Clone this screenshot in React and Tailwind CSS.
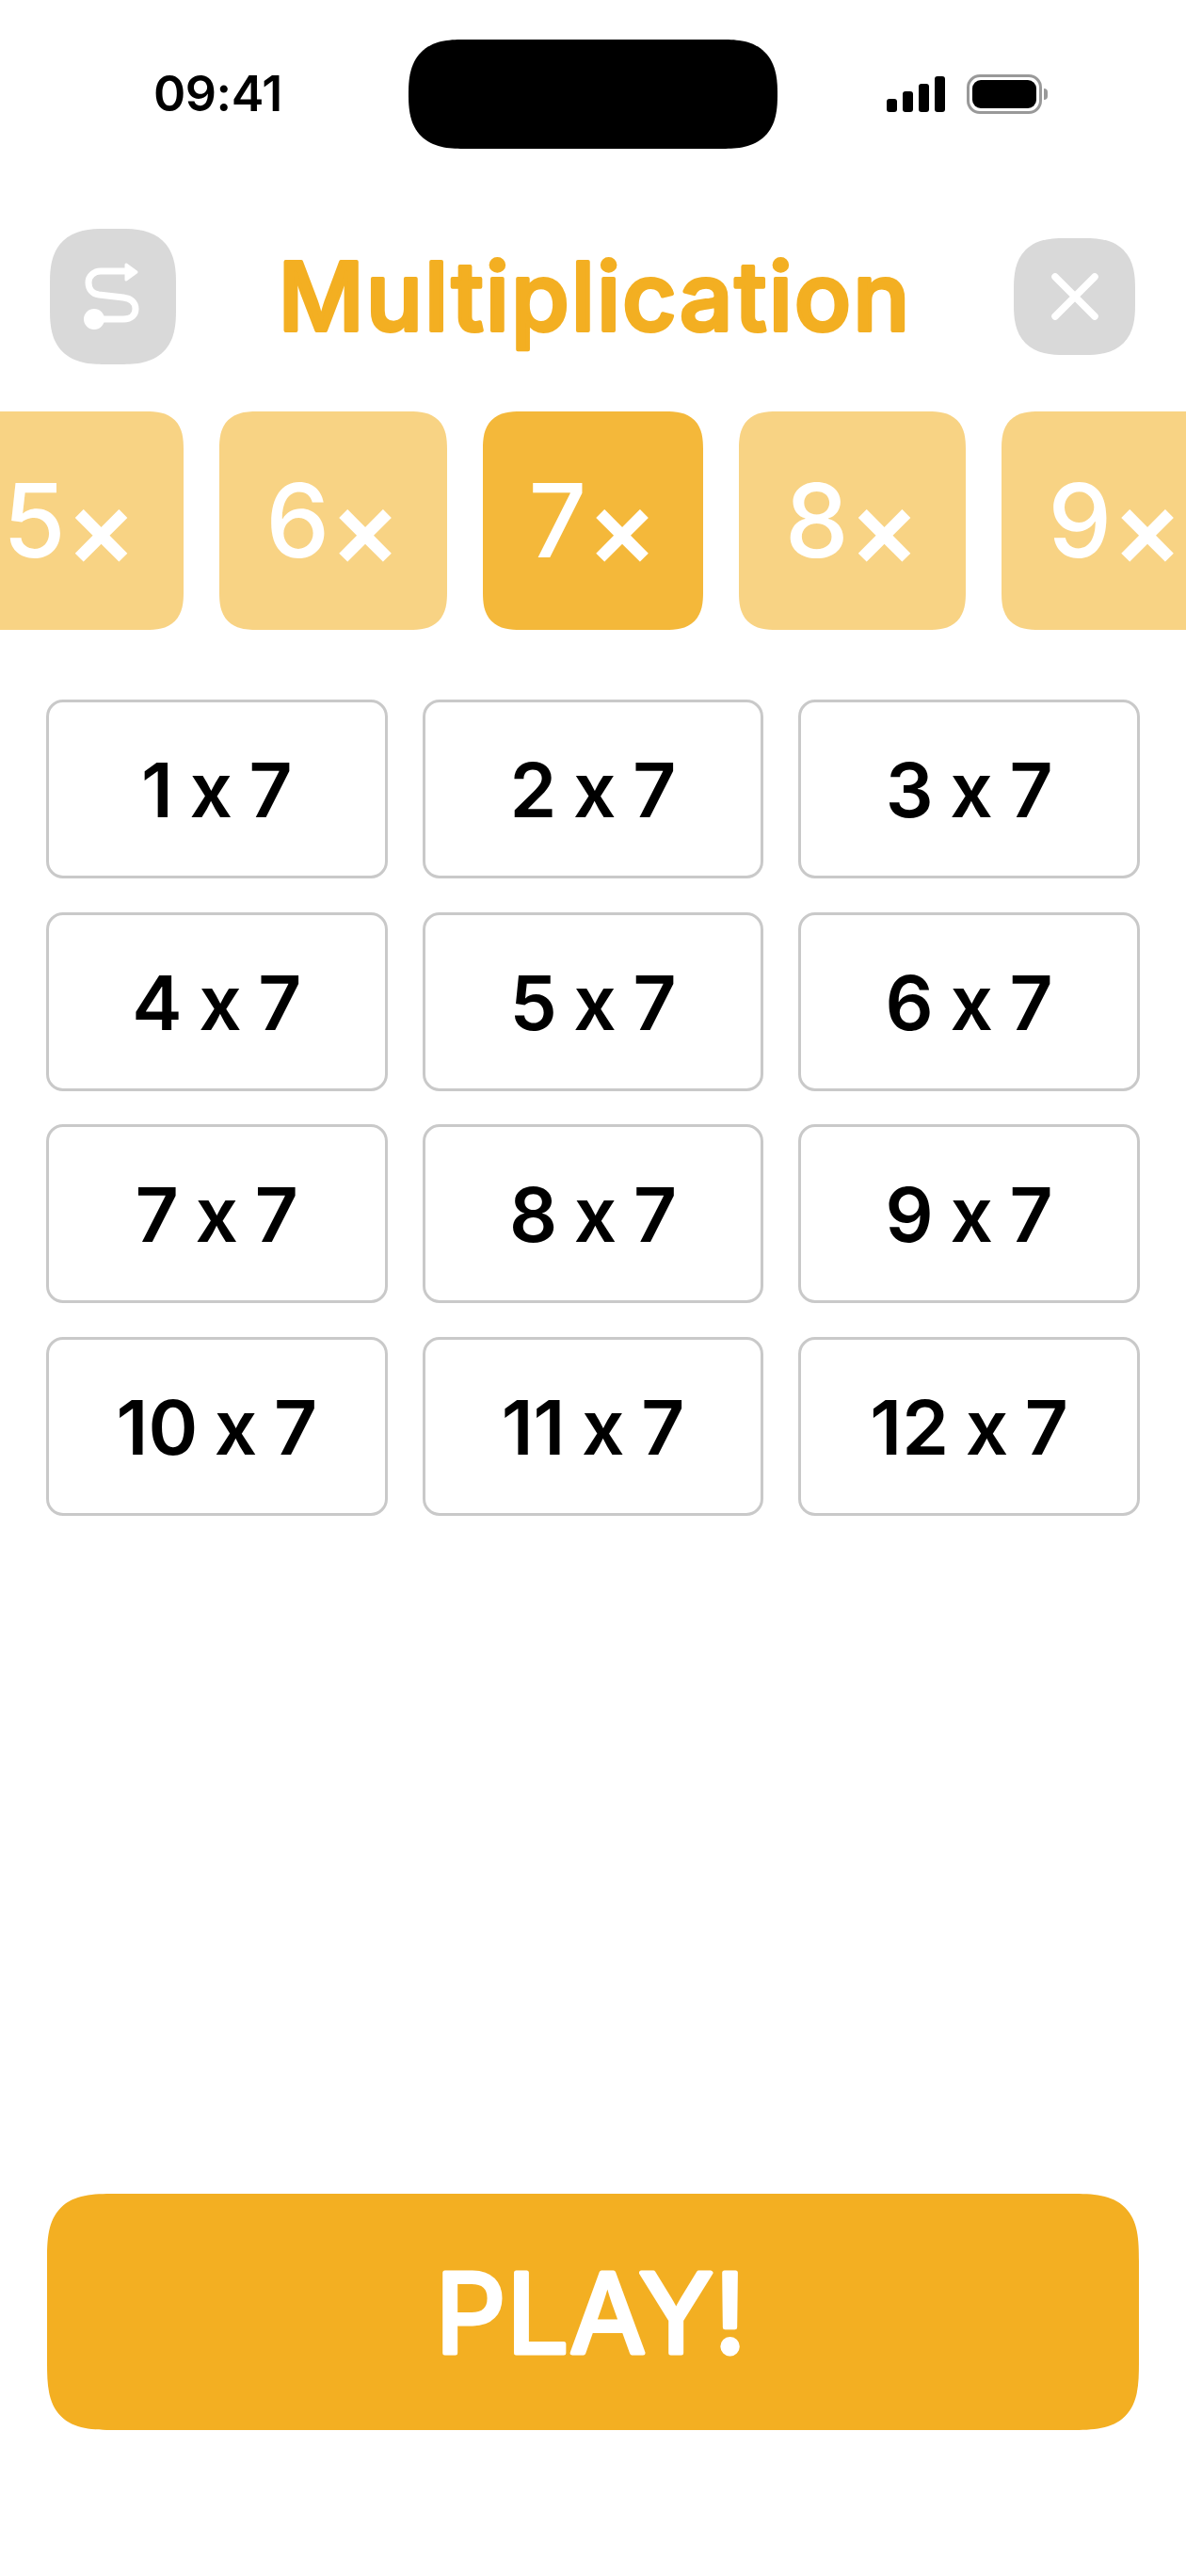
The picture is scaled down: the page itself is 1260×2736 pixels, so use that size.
const TABS = [
  { label: "5", width: "w-[242px]", active: false },
  { label: "6", width: "w-[242px]", active: false },
  { label: "7", width: "w-[234px]", active: true },
  { label: "8", width: "w-[241px]", active: false },
  { label: "9", width: "w-[242px]", active: false },
];

const ROWS = [1, 2, 3, 4, 5, 6, 7, 8, 9, 10, 11, 12];

function StatusBar() {
  return (
    <div className="h-[158px] pt-[42px] pl-[163px] flex items-start">
      <span className="w-[271px] mt-[28px] text-[52px] leading-[60px] font-semibold tracking-[-0.5px] text-black">09:41</span>
      <div className="w-[392px] h-[116px] bg-black rounded-[58px] [corner-shape:superellipse(1.4)]" />
      <div className="ml-[116px] mt-[37px] flex items-center">
        <div className="flex items-end gap-[6px] h-[38px]">
          <div className="w-[11px] h-[14px] bg-black rounded-[3px]" />
          <div className="w-[11px] h-[22px] bg-black rounded-[3px]" />
          <div className="w-[11px] h-[30px] bg-black rounded-[3px]" />
          <div className="w-[11px] h-[38px] bg-black rounded-[3px]" />
        </div>
        <div className="ml-[23px] w-[80px] h-[42px] border-[3px] border-[#999999] rounded-[14px] p-[3px]">
          <div className="w-full h-full bg-black rounded-[9px]" />
        </div>
        <div className="ml-[2px] w-[4px] h-[12px] bg-[#999999] rounded-r-full" />
      </div>
    </div>
  );
}

function ShuffleIcon() {
  return (
    <svg width="134" height="144" viewBox="0 0 134 144" fill="none">
      <circle cx="47" cy="96" r="11" fill="white" />
      <path
        d="M47 96H78C87 96 91 91 91 85C91 78 86 74 78 73L52 70C45 69 41 64 41 57C41 50 47 45 54 45H84"
        stroke="white"
        strokeWidth="7"
      />
      <path d="M81 38L92 46L81 54Z" fill="white" stroke="white" strokeWidth="3" strokeLinejoin="round" />
    </svg>
  );
}

function Header() {
  return (
    <div className="mt-[85px] pl-[53px] pr-[54px] flex items-center justify-between">
      <button className="w-[134px] h-[144px] bg-[#d9d9d9] rounded-[58px] [corner-shape:superellipse(1.4)]">
        <ShuffleIcon />
      </button>
      {/* svg text because the title has rounded stroke ends, css text-stroke only gives mitered ones */}
      <h1 className="w-[720px] h-[112px]">
        <svg className="overflow-visible" width="720" height="112" viewBox="0 0 720 112">
          <text
            x="360"
            y="92"
            textAnchor="middle"
            fontFamily="Inter, sans-serif"
            fontSize="100"
            fontWeight="500"
            letterSpacing="2"
            fill="#f3af22"
            stroke="#f3af22"
            strokeWidth="4"
            strokeLinejoin="round"
          >
            Multiplication
          </text>
        </svg>
      </h1>
      <button className="w-[129px] h-[124px] bg-[#d9d9d9] rounded-[54px] [corner-shape:superellipse(1.4)] flex items-center justify-center">
        <svg width="56" height="56" viewBox="0 0 56 56" fill="none">
          <path d="M7 7L49 49M49 7L7 49" stroke="white" strokeWidth="7.5" strokeLinecap="round" />
        </svg>
      </button>
    </div>
  );
}

function Tabs() {
  return (
    <div className="mt-[50px] flex gap-[38px] -ml-[47px] overflow-hidden w-[1307px]">
      {TABS.map((tab) => (
        <div
          key={tab.label}
          className={`${tab.width} ${tab.active ? "bg-[#f4b83a]" : "bg-[#f8d384]"} shrink-0 h-[232px] rounded-[40px] [corner-shape:superellipse(1.4)] flex items-center justify-center text-white text-[108px] font-medium`}
        >
          {tab.label}
          <span className="text-[112px] font-semibold translate-y-[7px]">×</span>
        </div>
      ))}
    </div>
  );
}

function Grid() {
  return (
    <div className="mt-[74px] mx-[49px] grid grid-cols-3 gap-x-[37px] gap-y-[35.5px]">
      {ROWS.map((n) => (
        <div
          key={n}
          className="h-[190px] pt-[2px] border-[3px] border-[#c9c9c9] rounded-[18px] flex items-center justify-center text-black text-[80px] font-semibold [word-spacing:-2.5px] [font-feature-settings:'calt'_0]"
        >
          {n} x 7
        </div>
      ))}
    </div>
  );
}

export default function App() {
  return (
    <div className="w-[1260px] h-[2736px] bg-white overflow-hidden font-['Inter',sans-serif] flex flex-col">
      <StatusBar />
      <Header />
      <Tabs />
      <Grid />
      <button className="mt-auto mb-[155px] mx-[50px] h-[251px] bg-[#f3af22] rounded-[72px] [corner-shape:superellipse(1.6)] flex items-center justify-center">
        <svg className="overflow-visible" width="400" height="130" viewBox="0 0 400 130">
          <text
            x="198"
            y="107.5"
            textAnchor="middle"
            fontFamily="Inter, sans-serif"
            fontSize="117"
            fontWeight="400"
            letterSpacing="1"
            fill="white"
            stroke="white"
            strokeWidth="5"
            strokeLinejoin="round"
          >
            PLAY!
          </text>
        </svg>
      </button>
    </div>
  );
}
